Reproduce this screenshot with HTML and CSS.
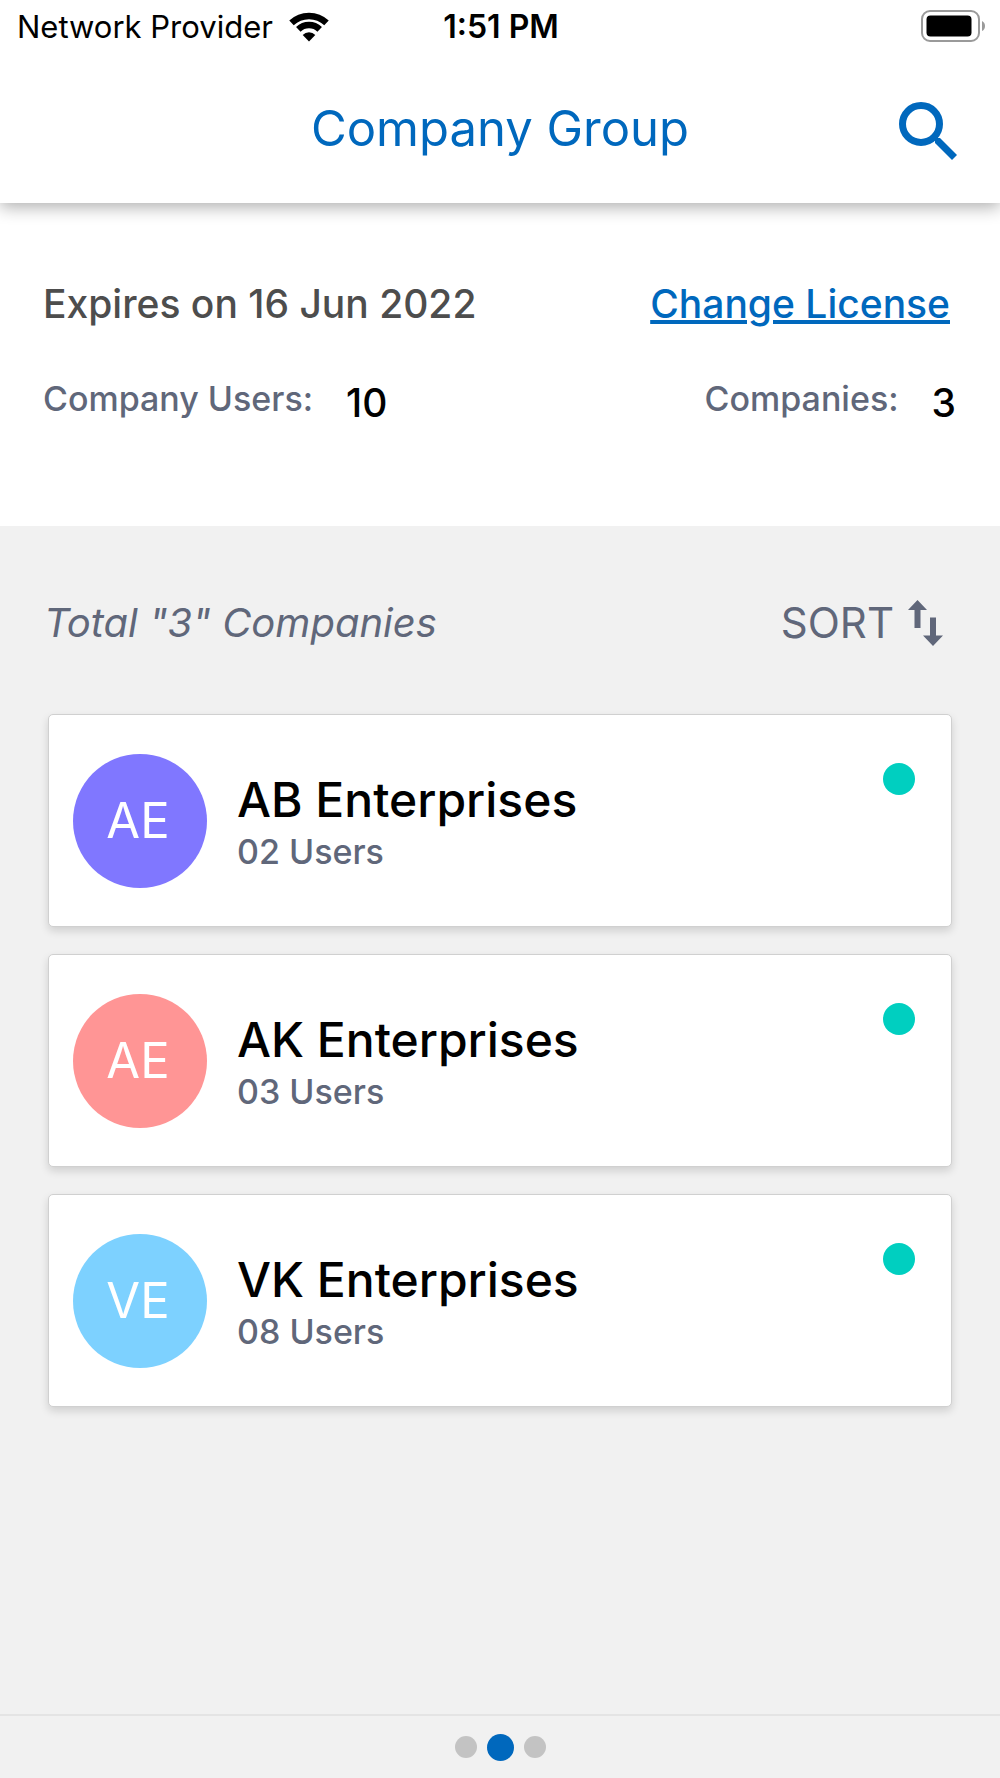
FILE: index.html
```html
<!DOCTYPE html>
<html lang="en">
<head>
<meta charset="utf-8">
<meta name="viewport" content="width=device-width, initial-scale=1">
<title>Company Group</title>
<link rel="stylesheet" href="styles.css">
</head>
<body>
<div class="app">
  <header class="header">
    <div class="status">
      <div class="status-carrier">
        <span>Network Provider</span>
        <svg class="wifi" viewBox="0 0 40 30" aria-hidden="true">
          <g fill="none" stroke="#000" stroke-width="6.500">
            <path d="M2.500 10.900a25.500 25.500 0 0 1 35 0"/>
            <path d="M9.300 17.400a15.500 15.500 0 0 1 21.400 0"/>
          </g>
          <path d="M20 29.500l-6.300-6.600a9 9 0 0 1 12.600 0z"/>
        </svg>
      </div>
      <span class="status-time">1:51 PM</span>
      <svg class="battery" viewBox="0 0 64 32" aria-hidden="true">
        <rect x="1" y="1" width="57" height="30" rx="8" fill="none" stroke="#9a9a9a" stroke-width="2"/>
        <rect x="5.500" y="5.500" width="45" height="21" rx="4"/>
        <path d="M61 11q3 1.500 3 5t-3 5z" fill="#9a9a9a"/>
      </svg>
    </div>
    <div class="titlebar">
      <h1 class="title">Company Group</h1>
      <button class="search" type="button" aria-label="Search">
        <svg viewBox="0 0 58 58" aria-hidden="true">
          <circle cx="22" cy="22" r="18.500" fill="none" stroke="currentColor" stroke-width="7"/>
          <path d="M36 41v-3l2-2h3l17 17-5 5z" fill="currentColor"/>
        </svg>
      </button>
    </div>
  </header>

  <section class="license">
    <div class="license-row">
      <span class="expiry">Expires on 16 Jun 2022</span>
      <a class="change" href="#license">Change License</a>
    </div>
    <dl class="license-row">
      <div class="stat"><dt>Company Users:</dt><dd>10</dd></div>
      <div class="stat"><dt>Companies:</dt><dd>3</dd></div>
    </dl>
  </section>

  <main class="companies">
    <div class="toolbar">
      <h2 class="total">Total "3" Companies</h2>
      <button class="sort" type="button">SORT
        <svg viewBox="0 0 36 46" aria-hidden="true">
          <path fill="currentColor" d="M0 10L9.500 0 19 10h-6.500v18h-6V10zM15 35.500h7V17.500h6v18h7L25 46z"/>
        </svg>
      </button>
    </div>
    <ul class="list">
      <li class="card">
        <span class="avatar avatar-violet">AE</span>
        <div class="info"><h3 class="name">AB Enterprises</h3><p class="users">02 Users</p></div>
        <span class="online"></span>
      </li>
      <li class="card">
        <span class="avatar avatar-coral">AE</span>
        <div class="info"><h3 class="name">AK Enterprises</h3><p class="users">03 Users</p></div>
        <span class="online"></span>
      </li>
      <li class="card">
        <span class="avatar avatar-sky">VE</span>
        <div class="info"><h3 class="name">VK Enterprises</h3><p class="users">08 Users</p></div>
        <span class="online"></span>
      </li>
    </ul>
  </main>

  <nav class="pager" aria-label="Pages">
    <a class="dot" href="#page-1" aria-label="Page 1"></a>
    <a class="dot dot-active" href="#page-2" aria-label="Page 2" aria-current="page"></a>
    <a class="dot" href="#page-3" aria-label="Page 3"></a>
  </nav>
</div>
</body>
</html>
```
FILE: styles.css
```css
* {
  box-sizing: border-box;
  margin: 0;
  padding: 0;
}

body {
  background: #f1f1f1;
  color: #000;
  font-family: Inter, "Liberation Sans", sans-serif;
}

h1, h2, h3 {
  font-weight: 400;
}

button {
  border: 0;
  background: none;
  font: inherit;
  cursor: pointer;
}

svg {
  display: block;
}

.app {
  display: flex;
  flex-direction: column;
  min-height: 100vh;
}

.header {
  position: relative;
  background: #fff;
  box-shadow: 0 4px 16px rgba(0, 0, 0, 0.32);
}

.status {
  display: grid;
  grid-template-columns: 1fr auto 1fr;
  align-items: center;
  padding: 0 15px 0 17px;
  font-size: 31px;
  line-height: 54px;
}

.status-carrier {
  display: flex;
  align-items: center;
  gap: 16px;
}

.wifi {
  width: 40px;
  height: 30px;
}

.status-time {
  font-size: 32px;
  font-weight: 600;
}

.battery {
  width: 64px;
  height: 32px;
  margin-bottom: 2px;
  justify-self: end;
}

.titlebar {
  display: grid;
  grid-template-columns: 1fr auto 1fr;
  align-items: center;
  height: 149px;
  padding: 0 43px;
  color: #0068bd;
}

.title {
  grid-column: 2;
  font-size: 49px;
  line-height: 64px;
}

.search {
  justify-self: end;
  padding-top: 4px;
  color: inherit;
}

.search svg {
  width: 58px;
  height: 58px;
}

.license {
  display: flex;
  flex-direction: column;
  gap: 47px;
  padding: 77px 44px 95px 43px;
  background: #fff;
  font-weight: 500;
  line-height: 48px;
}

.license-row {
  display: flex;
  justify-content: space-between;
}

.expiry, .change {
  font-size: 39px;
}

.expiry {
  color: #4d4d4d;
}

.change {
  margin-right: 6px;
  color: #0068bd;
  text-decoration-thickness: 4px;
}

.stat {
  display: flex;
  gap: 33px;
}

.stat dt {
  color: #60677a;
  font-size: 34px;
}

.stat dd {
  font-size: 39px;
  line-height: 56px;
}

.companies {
  flex: 1;
  padding: 69px 48px;
}

.toolbar {
  display: flex;
  justify-content: space-between;
  margin-bottom: 63px;
  padding-right: 8px;
  margin-left: -4px;
  color: #60677a;
  font-size: 42px;
  line-height: 56px;
}

.total {
  font-size: 40px;
  font-style: italic;
}

.sort {
  display: flex;
  align-items: center;
  gap: 14px;
  color: inherit;
}

.sort svg {
  width: 36px;
  height: 46px;
}

.list {
  display: grid;
  gap: 27px;
  list-style: none;
}

.card {
  display: flex;
  align-items: center;
  gap: 30px;
  min-height: 213px;
  padding: 24px 36px 24px 24px;
  border: 1px solid #d0d0d0;
  border-radius: 5px;
  background: #fff;
  box-shadow: 0 4px 8px rgba(0, 0, 0, 0.14);
}

.avatar {
  flex: none;
  width: 134px;
  height: 134px;
  padding-right: 4px;
  border-radius: 50%;
  color: #fff;
  font-size: 49px;
  line-height: 134px;
  text-align: center;
}

.avatar-violet {
  background: #8077ff;
}

.avatar-coral {
  background: #ff9595;
}

.avatar-sky {
  background: #7dd1ff;
}

.info {
  flex: 1;
  padding-top: 7px;
  font-weight: 500;
}

.name {
  font-size: 48px;
  font-weight: 500;
  line-height: 56px;
}

.users {
  color: #60677a;
  font-size: 34px;
  line-height: 48px;
}

.online {
  align-self: flex-start;
  width: 32px;
  height: 32px;
  margin-top: 24px;
  border-radius: 50%;
  background: #00cfc0;
}

.pager {
  display: flex;
  align-items: center;
  justify-content: center;
  gap: 10px;
  height: 64px;
  border-top: 2px solid #e4e4e4;
}

.dot {
  width: 22px;
  height: 22px;
  border-radius: 50%;
  background: #c3c3c3;
}

.dot-active {
  width: 27px;
  height: 27px;
  background: #0068bd;
}
```
